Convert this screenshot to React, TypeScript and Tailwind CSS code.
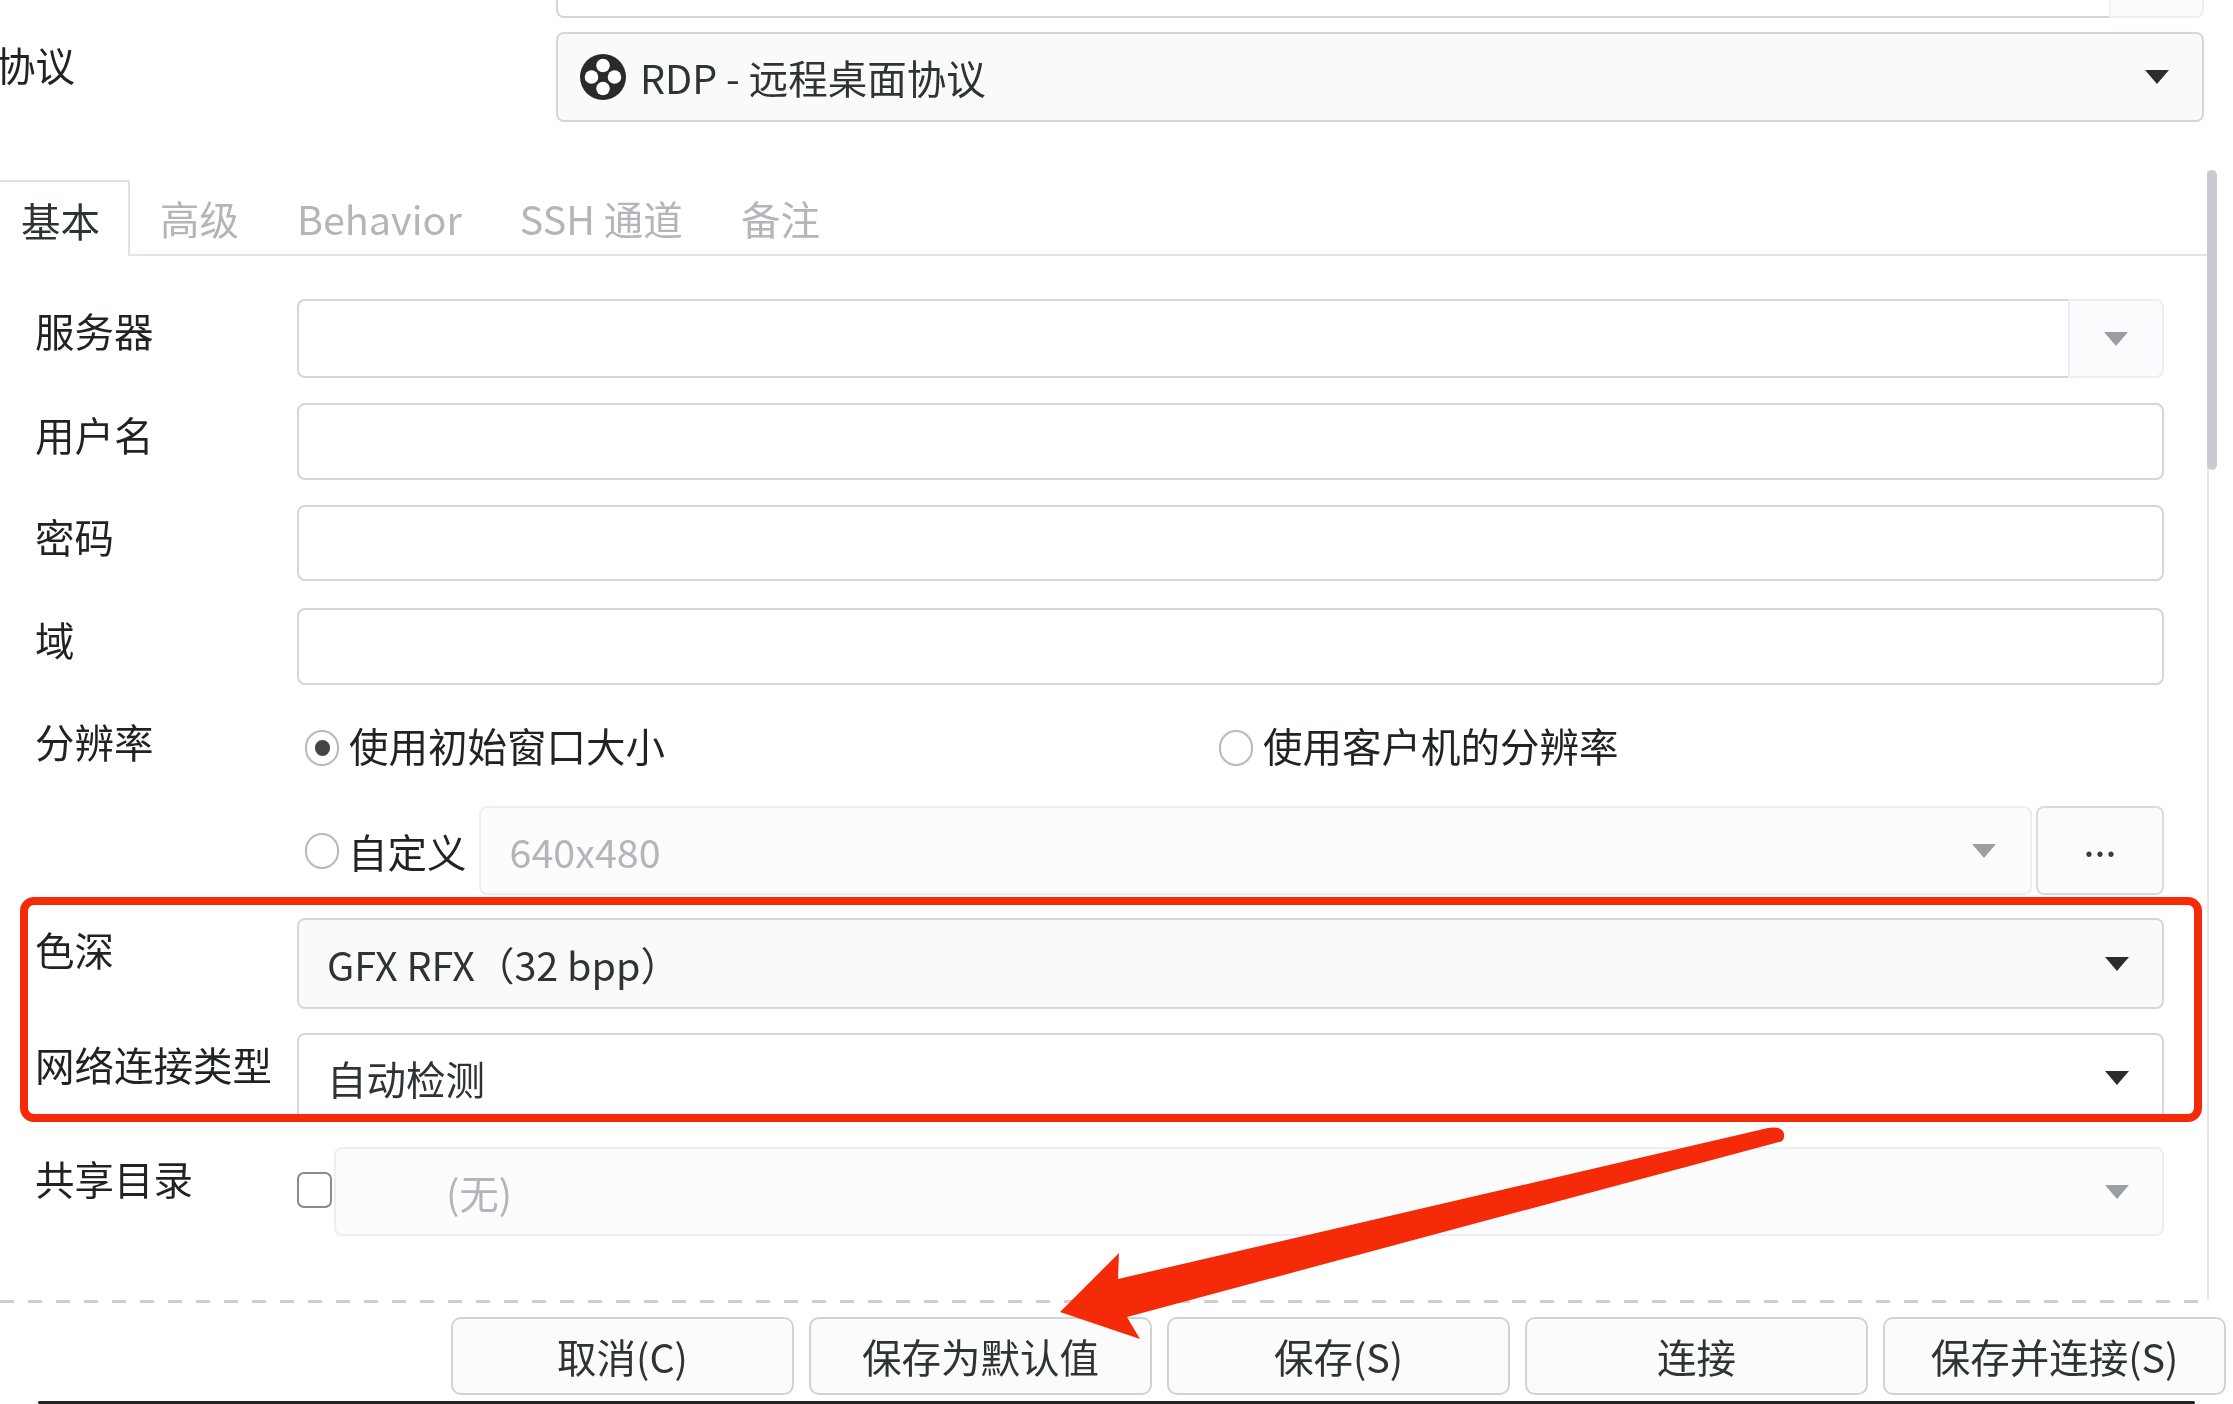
import React from 'react';

const Arrow = ({ muted = false }: { muted?: boolean }) => (
  <svg width="26" height="16" viewBox="0 0 26 16" className="shrink-0">
    <path d="M1 1 H25 L13 15 Z" fill={muted ? '#9c9ea5' : '#2c2c2c'} />
  </svg>
);

const Radio = ({ checked = false }: { checked?: boolean }) => (
  <span className="flex h-[36px] w-[34px] shrink-0 items-center justify-center rounded-full border-2 border-[#b9b9b9] bg-white">
    {checked && <span className="h-[16px] w-[15px] rounded-full bg-[#444]" />}
  </span>
);

const Label = ({ children }: { children: React.ReactNode }) => (
  <div className="w-[297px] shrink-0 pl-[35px] pt-[11px] leading-[40px] text-[#1f2325]">{children}</div>
);

// entry with a small disabled looking dropdown stuck on the right
const EntryCombo = ({ className }: { className: string }) => (
  <div className={`flex ${className}`}>
    <div className="flex-1 rounded-l-[8px] border-2 border-r-0 border-[#d6d6d6] bg-white" />
    <div className="flex w-[96px] items-center justify-center rounded-r-[8px] border-2 border-[#eceef5] bg-[#fbfbfd]">
      <Arrow muted />
    </div>
  </div>
);

const Select = ({ text, className }: { text: string; className: string }) => (
  <div className={`flex flex-1 items-center justify-between rounded-[8px] border-2 border-[#d6d6d6] pl-[28px] pr-[32px] text-[#2e3436] ${className}`}>
    <span className="leading-[40px]">{text}</span>
    <Arrow />
  </div>
);

const FootButton = ({ text }: { text: string }) => (
  <button className="flex h-[78px] w-[343px] items-center justify-center rounded-[10px] border-2 border-[#d2d2d2] bg-[#fbfbfb] leading-[40px] text-[#2e3436]">
    {text}
  </button>
);

export default function App() {
  return (
    <div className="relative h-[1404px] w-[2233px] overflow-hidden bg-white font-['Noto_Sans_CJK_SC',sans-serif] text-[39.5px] blur-[0.5px]">
      {/* top of the form, cut off by the screenshot */}
      <div className="ml-[556px] flex h-[18px] w-[1648px]">
        <div className="flex-1 rounded-bl-[8px] border-2 border-t-0 border-r-0 border-[#d6d6d6] bg-white" />
        <div className="w-[95px] rounded-br-[8px] border-2 border-t-0 border-[#eceef5] bg-[#fbfbfd]" />
      </div>

      <div className="mt-[14px] flex h-[90px]">
        <div className="w-[556px] shrink-0 pt-[12px] leading-[40px] text-[#1f2325]">
          <span className="-ml-[4px] block">协议</span>
        </div>
        <div className="flex w-[1648px] items-center justify-between rounded-[8px] border-2 border-[#d6d6d6] bg-[#fafafa] pl-[22px] pr-[32px]">
          <div className="flex items-center gap-[14px] text-[#2e3436]">
            <svg width="46" height="46" viewBox="0 0 44 44" className="shrink-0">
              <circle cx="22" cy="22" r="22" fill="#2a2a2a" />
              <circle cx="22" cy="11" r="6.5" fill="#fff" />
              <circle cx="22" cy="33" r="6.5" fill="#fff" />
              <circle cx="11" cy="22" r="6.5" fill="#fff" />
              <circle cx="33" cy="22" r="6.5" fill="#fff" />
            </svg>
            <span className="leading-[40px]">RDP - 远程桌面协议</span>
          </div>
          <Arrow />
        </div>
      </div>

      <div className="relative mt-[48px] w-[2209px] border-r-2 border-[#e6e7ec] pt-[10px]">
        <div className="absolute left-[2207px] top-0 h-[300px] w-[10px] rounded-full bg-[#c9cbd0]" />

        <div className="flex h-[76px]">
          <div className="flex w-[130px] items-center justify-center rounded-tr-[2px] border-r-2 border-t-2 border-[#dfe1e6] pr-[7px] pt-[2px] text-[#2e3436]">
            基本
          </div>
          <div className="flex flex-1 items-center gap-[58px] border-b-2 border-[#e2e4e9] pl-[30px] pt-[2px] text-[#b3b5ba]">
            <span>高级</span>
            <span>Behavior</span>
            <span>SSH 通道</span>
            <span>备注</span>
          </div>
        </div>

        <div className="pr-[43px]">
          <div className="mt-[43px] flex items-start">
            <Label>服务器</Label>
            <EntryCombo className="h-[79px] flex-1" />
          </div>
          <div className="mt-[25px] flex items-start">
            <Label>用户名</Label>
            <div className="h-[77px] flex-1 rounded-[8px] border-2 border-[#d6d6d6] bg-white" />
          </div>
          <div className="mt-[25px] flex items-start">
            <Label>密码</Label>
            <div className="h-[76px] flex-1 rounded-[8px] border-2 border-[#d6d6d6] bg-white" />
          </div>
          <div className="mt-[27px] flex items-start">
            <Label>域</Label>
            <div className="h-[77px] flex-1 rounded-[8px] border-2 border-[#d6d6d6] bg-white" />
          </div>

          <div className="mt-[43px] flex h-[40px]">
            <div className="-mt-[7px] w-[297px] shrink-0 pl-[35px] leading-[40px] text-[#1f2325]">分辨率</div>
            <div className="-mt-[3px] grid flex-1 grid-cols-[922px_1fr] pl-[8px] leading-[40px] text-[#1f2325]">
              <div className="flex items-center gap-[10px]">
                <Radio checked />
                <span className="pb-[6px]">使用初始窗口大小</span>
              </div>
              <div className="-ml-[8px] flex items-center gap-[10px]">
                <Radio />
                <span className="pb-[6px]">使用客户机的分辨率</span>
              </div>
            </div>
          </div>

          <div className="mt-[38px] flex h-[89px] items-center pl-[305px]">
            <Radio />
            <span className="ml-[9px] mr-[12px] leading-[40px] text-[#1f2325]">自定义</span>
            <div className="flex h-full flex-1 items-center justify-between rounded-[8px] border-2 border-[#eceef5] bg-[#fcfcfd] pl-[29px] pr-[33px] text-[#b3b5ba]">
              <span>640x480</span>
              <Arrow muted />
            </div>
            <div className="ml-[4px] flex h-full w-[128px] items-center justify-center rounded-[8px] border-2 border-[#d8dade] bg-[#fbfbfb] pb-[21px] text-[#3a3d40]">
              ...
            </div>
          </div>

          <div className="mt-[23px] flex h-[91px] items-start">
            <Label>色深</Label>
            <Select text="GFX RFX（32 bpp）" className="h-full bg-[#fafafa]" />
          </div>
          <div className="mt-[24px] flex h-[89px] items-start">
            <Label>网络连接类型</Label>
            <Select text="自动检测" className="h-full bg-white" />
          </div>
          <div className="mt-[25px] flex h-[89px] items-start">
            <Label>共享目录</Label>
            <span className="mt-[25px] h-[36px] w-[35px] shrink-0 rounded-[7px] border-2 border-[#8a8a8a] bg-white" />
            <div className="ml-[2px] flex h-full flex-1 items-center justify-between rounded-[8px] border-2 border-[#eceef5] bg-[#fcfcfd] pl-[110px] pr-[32px] text-[#b3b5ba]">
              <span>(无)</span>
              <Arrow muted />
            </div>
          </div>
          <div className="h-[64px]" />
        </div>
      </div>

      <div className="h-[3px] w-[2209px] bg-[repeating-linear-gradient(90deg,#cfcfcf_0,#cfcfcf_14px,transparent_14px,transparent_28px)]" />

      <div className="mt-[14px] flex gap-[15px] pl-[451px]">
        <FootButton text="取消(C)" />
        <FootButton text="保存为默认值" />
        <FootButton text="保存(S)" />
        <FootButton text="连接" />
        <FootButton text="保存并连接(S)" />
      </div>

      <div className="ml-[38px] mt-[6px] h-[3px] w-[2157px] rounded-full bg-[#222]" />

      {/* red annotation drawn over the screenshot */}
      <div className="absolute left-[20px] top-[897px] h-[225px] w-[2182px] rounded-[14px] border-[8px] border-[#f42a08]" />
      <svg className="absolute left-0 top-0" width="2233" height="1404" viewBox="0 0 2233 1404">
        <path
          d="M1768 1128 Q1783 1126 1784 1134 Q1785 1141 1779 1142 L1127 1317 L1140 1339 L1060 1312 L1119 1253 L1118 1279 Z"
          fill="#f42a08"
        />
      </svg>
    </div>
  );
}
